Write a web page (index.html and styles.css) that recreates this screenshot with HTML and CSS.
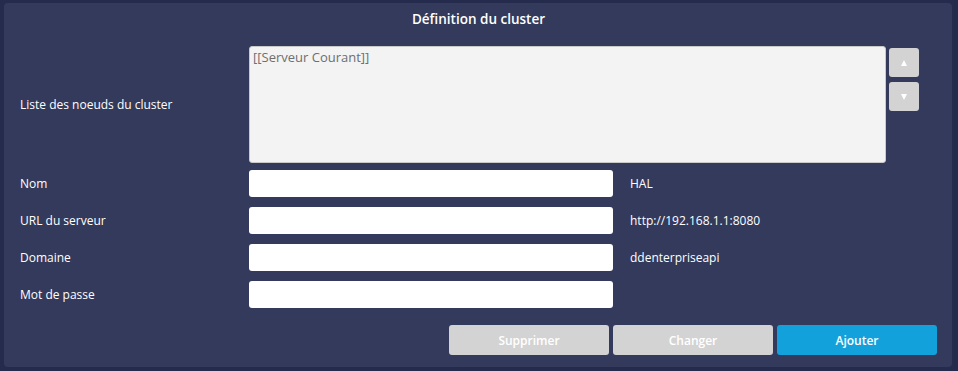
FILE: index.html
```html
<!DOCTYPE html>
<html lang="fr">
<head>
<meta charset="utf-8">
<title>Définition du cluster</title>
<link rel="stylesheet" href="styles.css">
</head>
<body>
<div class="panel">
  <div class="title">Définition du cluster</div>
  <div class="row-list">
    <div class="label">Liste des noeuds du cluster</div>
    <div class="list-box">[[Serveur Courant]]</div>
    <div class="arrows">
      <button class="arrow-btn"><span class="tri-up"></span></button>
      <button class="arrow-btn"><span class="tri-down"></span></button>
    </div>
  </div>
  <div class="row">
    <div class="label">Nom</div>
    <input class="field" type="text">
    <div class="value">HAL</div>
  </div>
  <div class="row">
    <div class="label">URL du serveur</div>
    <input class="field" type="text">
    <div class="value">http://192.168.1.1:8080</div>
  </div>
  <div class="row">
    <div class="label">Domaine</div>
    <input class="field" type="text">
    <div class="value">ddenterpriseapi</div>
  </div>
  <div class="row">
    <div class="label">Mot de passe</div>
    <input class="field" type="password">
    <div class="value"></div>
  </div>
  <div class="actions">
    <button class="btn btn-grey">Supprimer</button>
    <button class="btn btn-grey">Changer</button>
    <button class="btn btn-blue">Ajouter</button>
  </div>
</div>
</body>
</html>
```
FILE: styles.css
```css
html, body {
  margin: 0;
  padding: 0;
  background: #252b4d;
  font-family: "Open Sans", "Liberation Sans", sans-serif;
  font-size: 12px;
  color: #ffffff;
}
.panel {
  box-sizing: border-box;
  margin: 3px 6px 0 4px;
  height: 364px;
  background: #333a5c;
  border-radius: 4px;
  padding: 0 15px 0 16px;
}
.title {
  height: 32px;
  line-height: 32px;
  text-align: center;
  font-size: 13.5px;
  font-weight: 600;
}
.row-list {
  display: flex;
  align-items: flex-start;
  margin-top: 11px;
}
.row-list .label {
  align-self: center;
}
.label {
  width: 229px;
  flex: none;
}
.list-box {
  box-sizing: border-box;
  width: 637px;
  height: 117px;
  background: #f3f3f3;
  border: 1px solid #c9c9c9;
  border-radius: 3px;
  color: #6e6e6e;
  font-size: 13px;
  padding: 1px 3px;
  line-height: 18px;
}
.arrows {
  display: flex;
  flex-direction: column;
  gap: 5px;
  margin-left: 3px;
  margin-top: 2px;
}
.arrow-btn {
  width: 30px;
  height: 29px;
  border: none;
  border-radius: 3px;
  background: #d3d3d3;
  padding: 0;
  display: flex;
  align-items: center;
  justify-content: center;
}
.tri-up {
  width: 0;
  height: 0;
  border-left: 3px solid transparent;
  border-right: 3px solid transparent;
  border-bottom: 6px solid #ffffff;
}
.tri-down {
  width: 0;
  height: 0;
  border-left: 3px solid transparent;
  border-right: 3px solid transparent;
  border-top: 6px solid #ffffff;
}
.row {
  display: flex;
  align-items: center;
  margin-top: 10px;
}
.row-list + .row {
  margin-top: 7px;
}
.field {
  box-sizing: border-box;
  width: 364px;
  height: 27px;
  border: none;
  border-radius: 3px;
  background: #ffffff;
  margin: 0;
  flex: none;
}
.value {
  margin-left: 17px;
}
.actions {
  display: flex;
  justify-content: flex-end;
  gap: 4px;
  margin-top: 17px;
}
.btn {
  width: 160px;
  height: 30px;
  border: none;
  border-radius: 3px;
  color: #ffffff;
  font-family: "Open Sans", "Liberation Sans", sans-serif;
  font-size: 12px;
  font-weight: 600;
  padding: 0;
}
.btn-grey {
  background: #d3d3d3;
}
.btn-blue {
  background: #13a1dc;
}
```
